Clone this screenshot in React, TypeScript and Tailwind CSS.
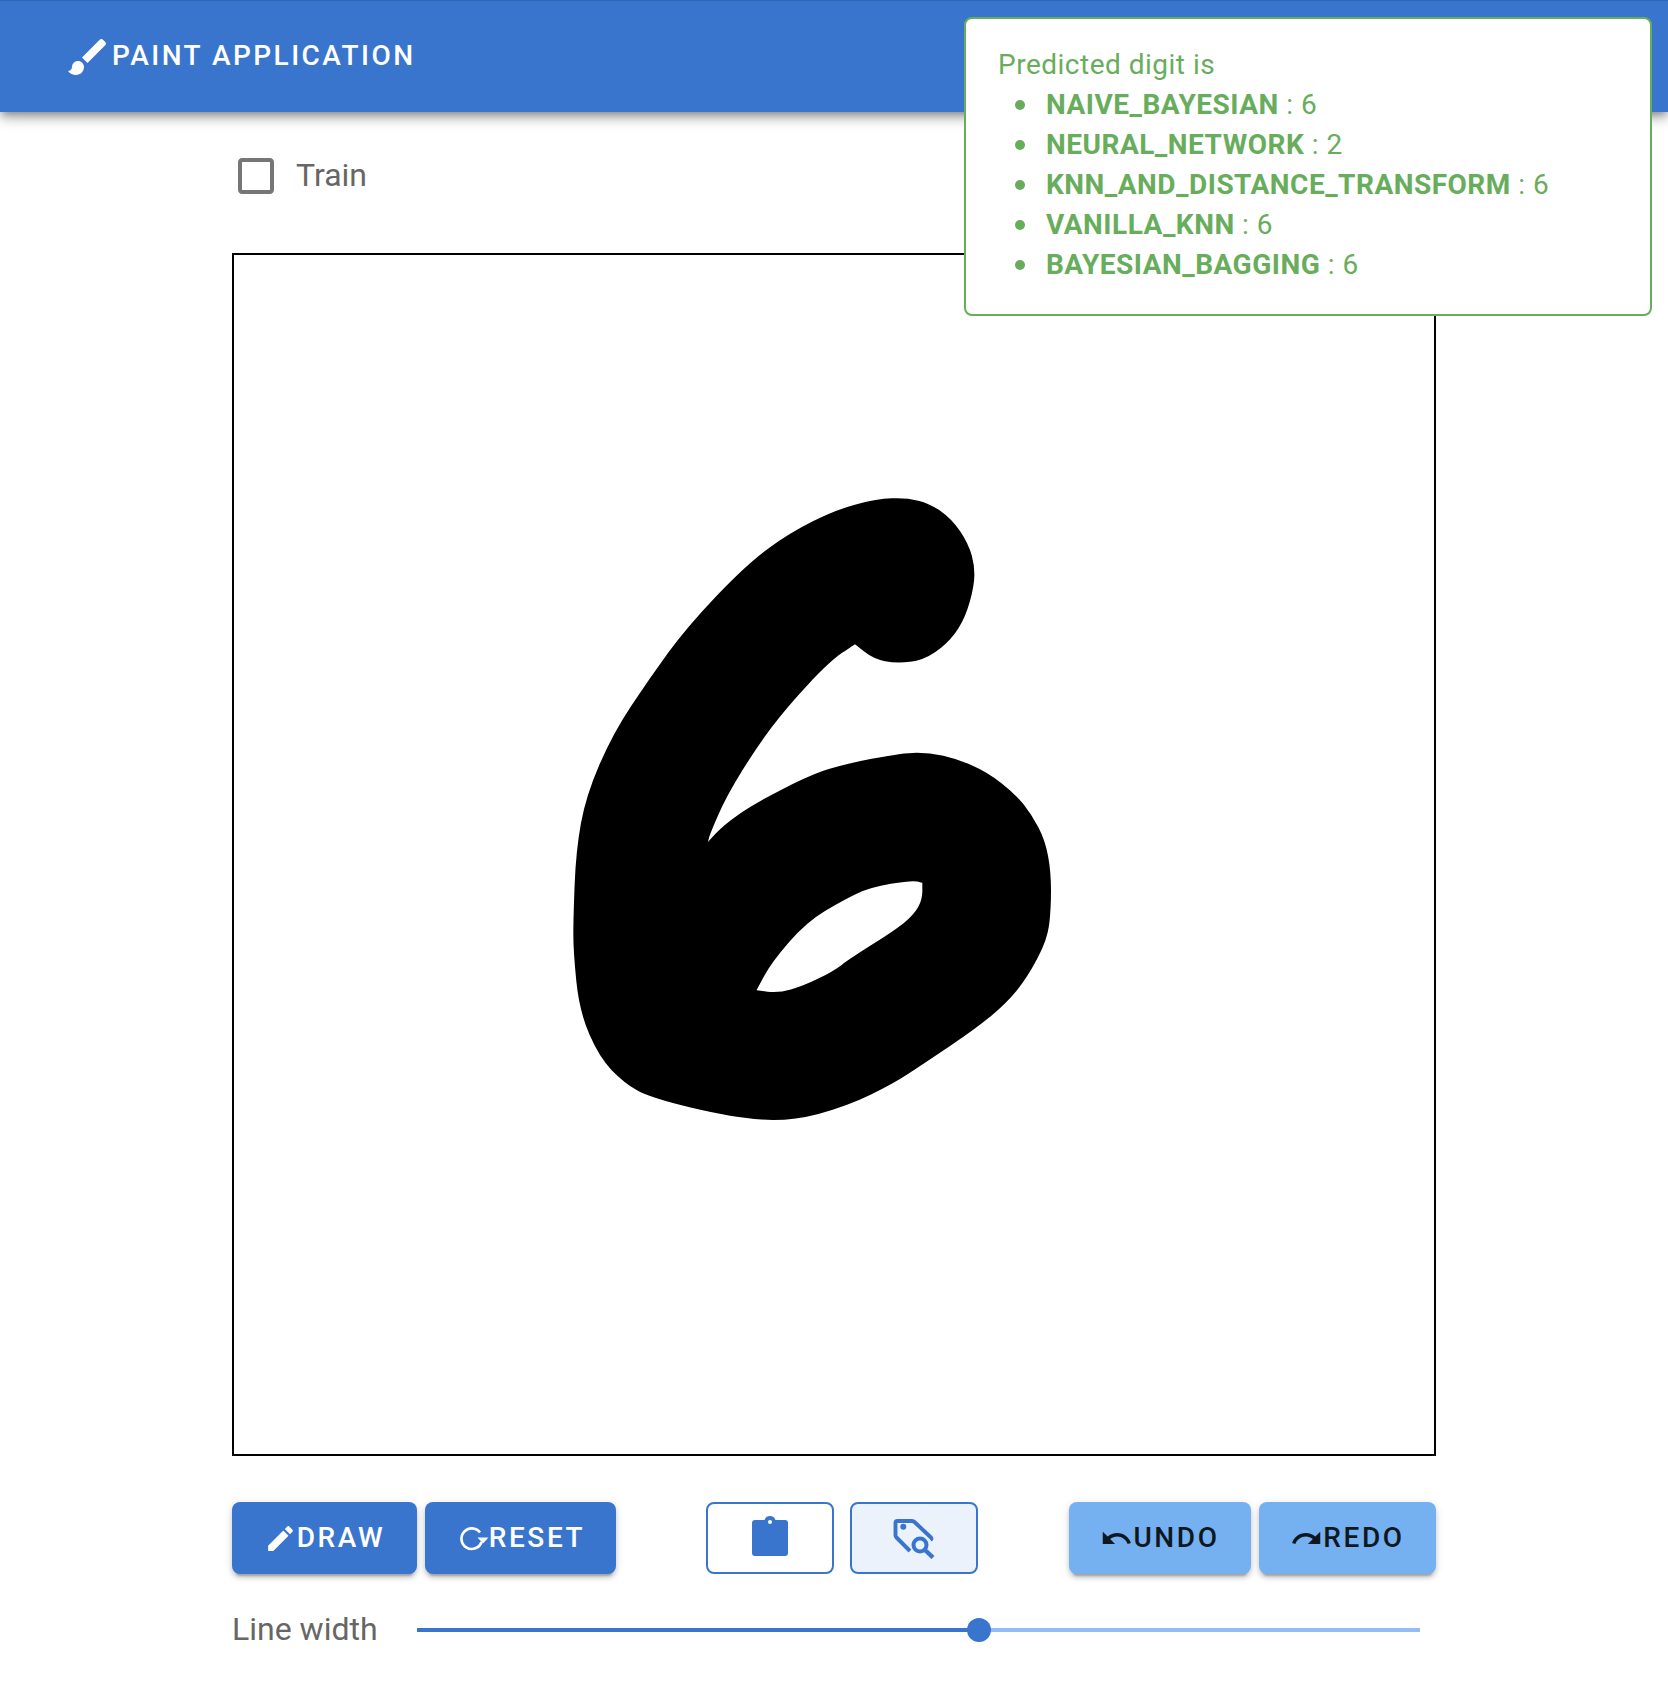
import type { ReactNode } from 'react'

type Pt = [number, number]

// outline of the hand drawn digit, a repeated point keeps a sharp corner
const sixOuter: Pt[] = [
  [70, 1040], [78, 880], [108, 750], [190, 600], [300, 470], [410, 350], [590, 200], [720, 125], [860, 70], [980, 45], [1070, 42],
  [1140, 56], [1205, 92], [1255, 150], [1276, 210], [1268, 270], [1238, 340], [1190, 390], [1120, 428], [1040, 436], [970, 425],
  [915, 390], [915, 390], [840, 430], [710, 540], [620, 635], [530, 750], [480, 840], [474, 860], [474, 860], [520, 820], [610, 770],
  [770, 705], [870, 677], [1060, 648], [1140, 648], [1220, 662], [1310, 693], [1395, 745], [1445, 795], [1485, 855], [1503, 930],
  [1503, 1020], [1492, 1092], [1432, 1182], [1370, 1242], [1280, 1302], [1120, 1387], [1030, 1434], [890, 1488], [720, 1524],
  [550, 1515], [300, 1468], [222, 1432], [148, 1372], [88, 1262], [70, 1120],
]

const sixHole: Pt[] = [
  [1117, 957], [1085, 951], [960, 968], [880, 998], [770, 1050], [665, 1145], [620, 1212], [620, 1212], [685, 1219], [760, 1202],
  [850, 1167], [900, 1137], [1040, 1067], [1092, 1032], [1117, 997], [1117, 957],
]

function smooth(points: Pt[]) {
  const mid = (a: Pt, b: Pt) => `${(a[0] + b[0]) / 2} ${(a[1] + b[1]) / 2}`
  let d = `M${mid(points[points.length - 1], points[0])}`
  points.forEach((p, i) => {
    d += ` Q${p[0]} ${p[1]} ${mid(p, points[(i + 1) % points.length])}`
  })
  return d + ' Z'
}

function Icon({ d, size = 33, className = '' }: { d: string; size?: number; className?: string }) {
  return (
    <svg width={size} height={size} viewBox="0 0 24 24" fill="currentColor" className={`shrink-0 ${className}`}>
      <path d={d} />
    </svg>
  )
}

function ContainedButton({ icon, label, className }: { icon: ReactNode; label: string; className: string }) {
  return (
    <button className={`flex h-[72px] items-center justify-center rounded-lg text-[28px] font-medium tracking-[2.6px] shadow-[0_6px_2px_-4px_rgba(0,0,0,0.2),0_4px_4px_0_rgba(0,0,0,0.14),0_2px_10px_0_rgba(0,0,0,0.12)] ${className}`}>
      {icon}
      {label}
    </button>
  )
}

const results = [
  ['NAIVE_BAYESIAN', '6'],
  ['NEURAL_NETWORK', '2'],
  ['KNN_AND_DISTANCE_TRANSFORM', '6'],
  ['VANILLA_KNN', '6'],
  ['BAYESIAN_BAGGING', '6'],
]

export default function App() {
  return (
    <div className="relative h-[1684px] w-[1668px] overflow-hidden bg-white font-['Roboto',sans-serif] text-[#666666]">
      {/* App bar */}
      <header className="flex h-[112px] items-center border-t border-[#3166b5] bg-[#3a75cd] pl-16 text-white shadow-[0_4px_8px_-2px_rgba(0,0,0,0.35),0_8px_10px_0_rgba(0,0,0,0.14),0_2px_20px_0_rgba(0,0,0,0.12)]">
        <Icon size={48} d="M7 14c-1.66 0-3 1.34-3 3 0 1.31-1.16 2-2 2 .92 1.22 2.49 2 4 2 2.21 0 4-1.79 4-4 0-1.66-1.34-3-3-3zm13.71-9.37l-1.34-1.34c-.39-.39-1.02-.39-1.41 0L9 12.25 11.75 15l8.96-8.96c.39-.39.39-1.02 0-1.41z" />
        <span className="pb-[2px] text-[28px] font-medium tracking-[2.46px]">PAINT APPLICATION</span>
      </header>

      {/* Prediction alert */}
      <div className="absolute left-[964px] top-[17px] h-[299px] w-[688px] rounded-lg border-2 border-[#68ad5c] bg-white px-8 pt-[26px] text-[28px] leading-10 tracking-[0.5px] text-[#68ad5c]">
        <div>Predicted digit is</div>
        <ul className="pl-12">
          {results.map(([name, value]) => (
            <li key={name} className="relative before:absolute before:-left-[31px] before:top-[15px] before:size-[10px] before:rounded-full before:bg-[#68ad5c]">
              <strong className="font-bold">{name}</strong> : {value}
            </li>
          ))}
        </ul>
      </div>

      <main className="ml-[232px] w-[1204px]">
        {/* Train checkbox */}
        <label className="flex h-[128px] items-center text-[32px]">
          <Icon size={48} className="text-[#767676]" d="M19 5v14H5V5h14m0-2H5c-1.1 0-2 .9-2 2v14c0 1.1.9 2 2 2h14c1.1 0 2-.9 2-2V5c0-1.1-.9-2-2-2z" />
          <span className="ml-4 pb-[2px]">Train</span>
        </label>

        {/* Canvas */}
        <div className="mt-[13px] flex h-[1203px] items-start border-2 border-black pl-[316px] pt-[225px]">
          <svg width="520" height="660" viewBox="0 0 1560 1568" preserveAspectRatio="none" className="shrink-0">
            <path d={`${smooth(sixOuter)} ${smooth(sixHole)}`} fill="#000" fillRule="evenodd" />
          </svg>
        </div>

        {/* Tools */}
        <div className="mt-[46px] flex gap-[90px]">
          <div className="flex gap-2">
            <ContainedButton
              className="w-[185px] bg-[#3a75cd] text-white"
              label="DRAW"
              icon={<Icon d="M3 17.25V21h3.75L17.81 9.94l-3.75-3.75L3 17.25zM20.71 7.04c.39-.39.39-1.02 0-1.41l-2.34-2.34c-.39-.39-1.02-.39-1.41 0l-1.83 1.83 3.75 3.75 1.83-1.83z" />}
            />
            <ContainedButton
              className="w-[191px] bg-[#3a75cd] text-white"
              label="RESET"
              icon={
                <svg width="33" height="33" viewBox="0 0 33 33" fill="none" className="shrink-0">
                  <path d="M24 10.5A10.3 10.3 0 1 0 25.5 20" stroke="currentColor" strokeWidth="2.6" />
                  <path d="M21.5 15.5h11l-5.5 6z" fill="currentColor" />
                </svg>
              }
            />
          </div>
          <div className="flex gap-4 text-[#3a75cd]">
            <button className="flex h-[72px] w-[128px] items-center justify-center rounded-lg border-2 border-[#3a75cd] pb-1">
              <svg width="36" height="40" viewBox="0 0 36 40" className="shrink-0">
                <path fillRule="evenodd" fill="currentColor" d="M3 4h9.5a5.8 5.8 0 0 1 11 0H33a3 3 0 0 1 3 3v30a3 3 0 0 1-3 3H3a3 3 0 0 1-3-3V7a3 3 0 0 1 3-3zM18 4a2 2 0 1 0 0 4 2 2 0 0 0 0-4z" />
              </svg>
            </button>
            <button className="flex h-[72px] w-[128px] items-center justify-center rounded-lg border-2 border-[#3a75cd] bg-[#ebf2fb]">
              <svg width="42" height="42" viewBox="0 0 42 42" fill="none" className="shrink-0">
                <path d="M17 34 3.5 20.5Q2.5 19.5 2.5 18V6Q2.5 4 4.5 4H19Q20.5 4 21.5 5L38 20.5Q39 22 37.5 23" stroke="currentColor" strokeWidth="3.9" />
                <circle cx="10.3" cy="9.7" r="3" fill="currentColor" />
                <circle cx="27" cy="28" r="6.5" stroke="currentColor" strokeWidth="4" />
                <path d="M32 33l8 7.5" stroke="currentColor" strokeWidth="4.4" />
              </svg>
            </button>
          </div>
          <div className="ml-auto flex gap-2">
            <ContainedButton
              className="w-[182px] bg-[#75b0f0] text-[#0e1820]"
              label="UNDO"
              icon={<Icon d="M12.5 8c-2.65 0-5.05.99-6.9 2.6L2 7v9h9l-3.62-3.62c1.39-1.16 3.16-1.88 5.12-1.88 3.54 0 6.55 2.31 7.6 5.5l2.37-.78C21.08 11.03 17.15 8 12.5 8z" />}
            />
            <ContainedButton
              className="w-[177px] bg-[#75b0f0] text-[#0e1820]"
              label="REDO"
              icon={<Icon d="M18.4 10.6C16.55 8.99 14.15 8 11.5 8c-4.65 0-8.58 3.03-9.96 7.22L3.9 16c1.05-3.19 4.05-5.5 7.6-5.5 1.95 0 3.73.72 5.12 1.88L13 16h9V7l-3.6 3.6z" />}
            />
          </div>
        </div>

        {/* Line width slider */}
        <div className="mt-8 flex h-12 items-center text-[32px]">
          <span className="w-[185px] shrink-0 pb-[2px]">Line width</span>
          <div className="relative mr-4 h-1 flex-1 bg-[#94bdf8]">
            <div className="h-1 w-[56%] bg-[#3a75cd]" />
            <div className="absolute left-[56%] top-1/2 size-6 -translate-x-1/2 -translate-y-1/2 rounded-full bg-[#3a75cd]" />
          </div>
        </div>
      </main>
    </div>
  )
}
